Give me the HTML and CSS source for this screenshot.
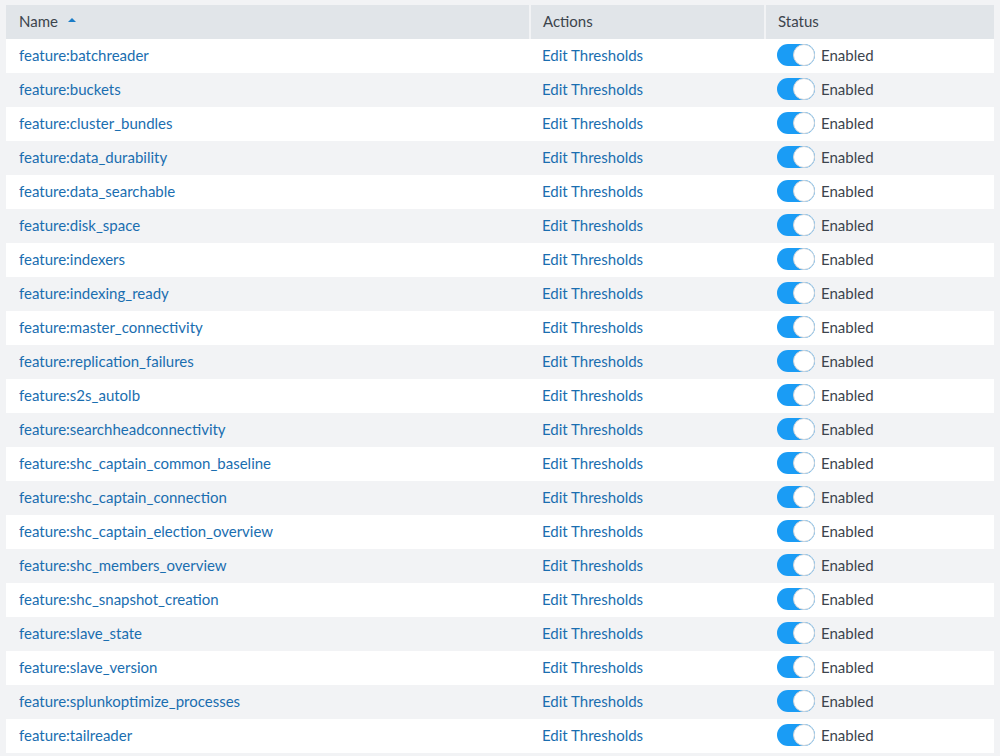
FILE: index.html
```html
<!DOCTYPE html>
<html lang="en">
<head>
    <meta charset="UTF-8">
    <title>Health Report Features</title>
    <link rel="stylesheet" href="styles.css">
</head>
<body>

    <table class="features">
        <thead>
            <tr>
                <th class="col-name">Name <span class="sort-up"></span></th>
                <th class="col-actions">Actions</th>
                <th class="col-status">Status</th>
            </tr>
        </thead>
        <tbody id="rows"></tbody>
    </table>

    <script>
        const features = [
            'batchreader', 'buckets', 'cluster_bundles', 'data_durability',
            'data_searchable', 'disk_space', 'indexers', 'indexing_ready',
            'master_connectivity', 'replication_failures', 's2s_autolb',
            'searchheadconnectivity', 'shc_captain_common_baseline',
            'shc_captain_connection', 'shc_captain_election_overview',
            'shc_members_overview', 'shc_snapshot_creation', 'slave_state',
            'slave_version', 'splunkoptimize_processes', 'tailreader'
        ];

        const tbody = document.getElementById('rows');
        features.forEach(name => {
            const tr = document.createElement('tr');
            tr.innerHTML = `
                <td><a href="#">feature:${name}</a></td>
                <td><a href="#">Edit Thresholds</a></td>
                <td><span class="toggle"><span class="knob"></span></span><span class="status-label">Enabled</span></td>`;
            tbody.appendChild(tr);
        });
    </script>

</body>
</html>
```

FILE: styles.css
```css
body {
    margin: 0;
    padding: 5px 6px;
    background-color: #f2f3f5;
    font-family: Lato, "Open Sans", sans-serif;
    font-size: 15px;
    color: #3c444d;
}

.features {
    width: 988px;
    border-collapse: collapse;
}

.features th {
    height: 32px;
    padding: 0 12px 2px;
    text-align: left;
    font-weight: normal;
    background-color: #e1e5e9;
    border-left: 2px solid #f2f3f5;
}

.features th:first-child {
    border-left: none;
    padding-left: 13px;
}

.col-name {
    width: 498px;
}

.col-actions {
    width: 209px;
}

.sort-up {
    display: inline-block;
    width: 0;
    height: 0;
    margin-left: 6px;
    vertical-align: 5px;
    border-left: 4px solid transparent;
    border-right: 4px solid transparent;
    border-bottom: 4px solid #1a7dc8;
}

.features td {
    height: 32px;
    padding: 0 12px 2px;
}

.features td:first-child {
    padding-left: 13px;
}

.features tbody tr:nth-child(odd) {
    background-color: #ffffff;
}

.features tbody tr:nth-child(even) {
    background-color: #f2f3f5;
}

.features a {
    color: #1a6eb0;
    text-decoration: none;
}

.toggle {
    display: inline-block;
    position: relative;
    width: 38px;
    height: 22px;
    border-radius: 11px;
    background-color: #1a9cf5;
    vertical-align: middle;
    margin-right: 6px;
}

.knob {
    position: absolute;
    right: 0;
    top: 0;
    width: 20px;
    height: 20px;
    border-radius: 50%;
    background-color: #ffffff;
    border: 1px solid #ccd3da;
}

.status-label {
    vertical-align: middle;
}
```
